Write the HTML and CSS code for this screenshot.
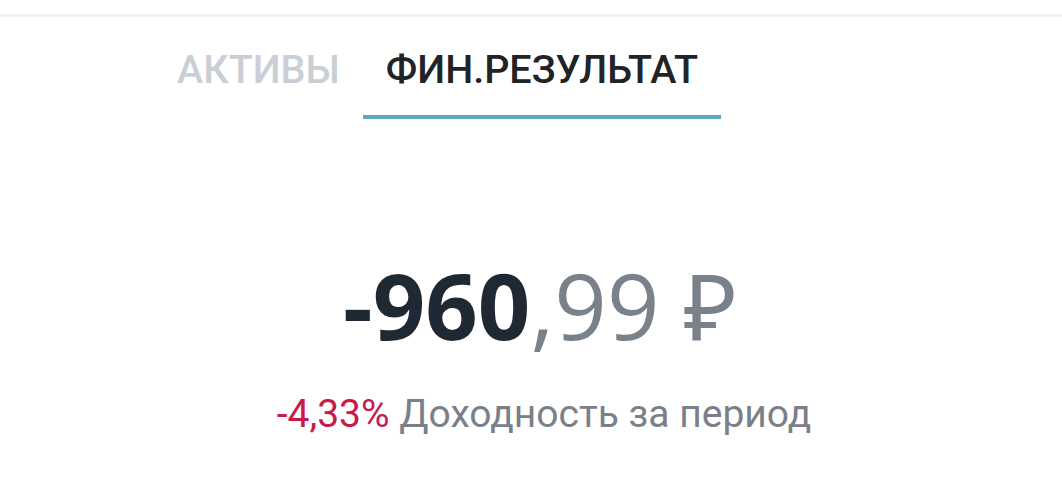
FILE: index.html
```html
<!DOCTYPE html>
<html lang="ru">
<head>
<meta charset="utf-8">
<link rel="stylesheet" href="styles.css">
</head>
<body>
<div class="topline"></div>
<nav class="tabs">
  <div class="tab">АКТИВЫ</div>
  <div class="tab active">ФИН.РЕЗУЛЬТАТ</div>
</nav>
<main class="summary">
  <div class="amount"><span class="int">-960</span><span class="frac">,99 ₽</span></div>
  <div class="yield"><span class="pct">-4,33%</span> <span class="label">Доходность за период</span></div>
</main>
</body>
</html>
```
FILE: styles.css
```css
html, body {
  margin: 0;
  padding: 0;
  background: #ffffff;
}
body {
  font-family: Roboto, "Noto Sans", sans-serif;
}
.topline {
  margin-top: 14px;
  height: 3px;
  background: #f2f3f4;
}
.tabs {
  display: flex;
  padding-left: 154px;
}
.tab {
  font-size: 39.5px;
  font-weight: 500;
  line-height: 47px;
  padding: 29px 23px 22px;
  border-bottom: 4px solid transparent;
  color: #c9cfd5;
}
.tab.active {
  color: #222326;
  border-bottom-color: #5ba8c5;
}
.summary {
  padding-left: 18px;
  text-align: center;
  margin-top: 140px;
}
.amount {
  font-family: "Open Sans", "Noto Sans", sans-serif;
  font-size: 92px;
  line-height: 92px;
}
.int {
  font-weight: 700;
  color: #1f2933;
}
.frac {
  font-weight: 400;
  color: #79818b;
}
.yield {
  margin-top: 40px;
  padding-left: 8px;
  font-size: 39px;
  line-height: 46px;
}
.pct {
  color: #c81a4b;
}
.label {
  color: #7a8089;
}
```
